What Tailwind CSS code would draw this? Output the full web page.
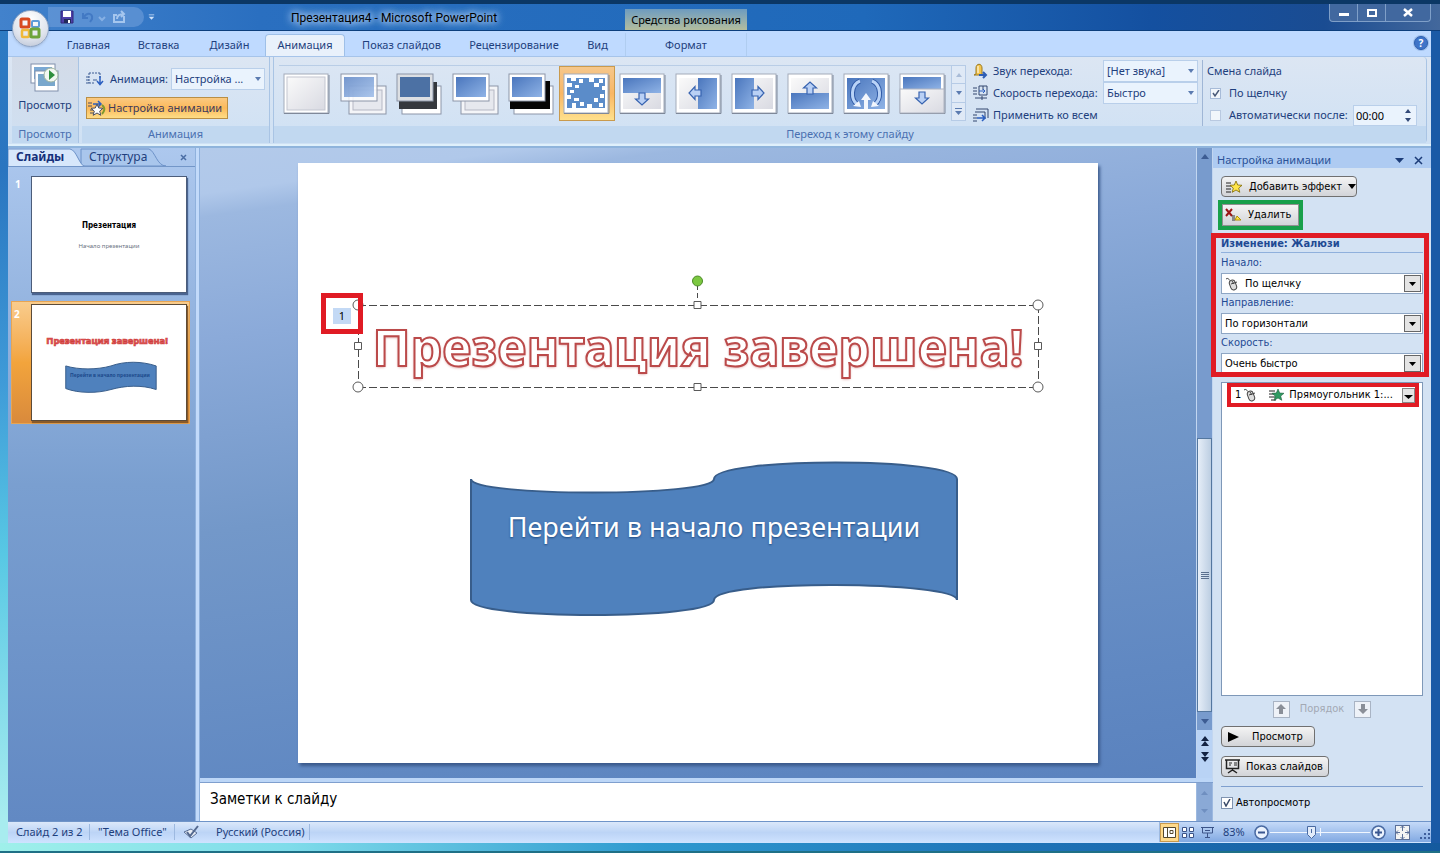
<!DOCTYPE html>
<html lang="ru">
<head>
<meta charset="utf-8">
<title>Презентация4 - Microsoft PowerPoint</title>
<script src="https://cdn.jsdelivr.net/npm/@tailwindcss/browser@4"></script>
</head>
<body class="font-['Noto_Sans','Open_Sans',sans-serif] text-[11px] leading-4 text-[#1e3f7d]">
<svg class="absolute size-0" aria-hidden="true">
  <defs>
    <linearGradient id="blue" x1="0" y1="0" x2="1" y2="1"><stop offset="0" stop-color="#4a76bd"/><stop offset="1" stop-color="#8fb3e6"/></linearGradient>
    <linearGradient id="paper" x1="0" y1="0" x2="1" y2="1"><stop offset="0" stop-color="#fafafa"/><stop offset="1" stop-color="#d9dae2"/></linearGradient>
    <g id="frame"><rect x="1" y="1" width="44" height="39" fill="#fff" stroke="#a3abba"/><path d="M1 40.500h45V2" fill="none" stroke="#7f8899"/></g>
    <path id="arrow" d="M-3-6h6v6h3.500L0 6l-6.500-6H-3z" fill="#b9d0f5" stroke="#3763b0" stroke-width="1.200"/>
    <g id="mouse" fill="none" stroke="#444" stroke-width="1"><path d="M1 2c3-2 3 2 5 2"/><rect x="5" y="3" width="6" height="10" rx="3" transform="rotate(-20 8 8)" fill="#ddd"/><path d="M6 7l6-2M7 4l2 3"/></g>
    <path id="star" d="M0-6l1.700 4 4.300.3-3.300 2.800 1.100 4.200L0 3l-3.800 2.300 1.100-4.200L-6-1.700l4.300-.3z"/>
  </defs>
</svg>

<div class="flex min-h-screen flex-col bg-[linear-gradient(180deg,#2f7cc4_0,#2a75c0_20%,#3f9bd8_45%,#58c8e4_65%,#a8ecef_96%)]">
  <div class="flex min-h-screen flex-col border-t-4 border-[#0b3765] bg-[linear-gradient(90deg,transparent_0,transparent_12px,#1a5aa6_90%)] pl-2 pr-[9px]">

    <!-- Title bar -->
    <header class="relative -ml-2 -mr-[9px] flex h-[27px] shrink-0 items-center border-b border-[#0d3f7c] bg-[linear-gradient(90deg,#4282cc_0,#2a6fc0_18%,#1f69ba_60%,#1450a0_80%,#1a4c92_92%,#43689c_100%)] pl-12">
      <div class="flex h-5 w-24 items-center gap-3 rounded-r-full bg-[#6f9fda]/60 pl-3">
        <button aria-label="Сохранить"><svg class="block" width="14" height="14" viewBox="0 0 14 14"><path d="M1 1h12v12H1z" fill="#4d3fa8" stroke="#33297a"/><path d="M3 1h8v6H3z" fill="#fff"/><path d="M4 9h7v4H4z" fill="#222a5a"/><path d="M8 10h2v3H8z" fill="#fff"/></svg></button>
        <button aria-label="Отменить" class="-ml-1"><svg class="block" width="26" height="14" viewBox="0 0 26 14" fill="none" stroke="#4279c4" stroke-width="2"><path d="M1 3v5h5M2 7c3-5 9-4 8 2l-2 3"/><path d="M17 7l3 3 3-3" stroke="#86b0e4"/></svg></button>
        <button aria-label="Вернуть" class="-ml-2"><svg class="block" width="14" height="14" viewBox="0 0 14 14" fill="none" stroke="#a5c6ee" stroke-width="2"><path d="M12 6v6H2V5h3"/><path d="M5 9c0-4 3-5 7-5M9 1l3 3-3 3"/></svg></button>
      </div>
      <button aria-label="Настройка панели" class="ml-1"><svg width="7" height="7" viewBox="0 0 9 8" fill="#cfe2fa"><path d="M1 0h7v1H1zM1 3h7L4.500 7z"/></svg></button>
      <h1 class="absolute left-[291px] top-[6px] font-['Roboto','Noto_Sans',sans-serif] text-xs text-black [text-shadow:0_0_6px_#b9d5f5,0_0_8px_#b9d5f5,0_0_10px_#b9d5f5]">Презентация4 - Microsoft PowerPoint</h1>
      <div class="absolute left-[625px] top-[5px] h-[21px] w-[122px] bg-gradient-to-b from-[#6d9bbf] to-[#b3bd9d] pt-[3px] text-center text-black">Средства рисования</div>
      <div class="absolute right-[9px] top-0 flex h-[18px] items-center rounded-b border border-t-0 border-[#7f9fc8] bg-[#41689f]">
        <button aria-label="Свернуть" class="flex h-full w-7 items-center justify-center border-r border-[#7f9fc8]"><span class="mt-1 h-[3px] w-2.5 bg-white"></span></button>
        <button aria-label="Развернуть" class="flex h-full w-7 items-center justify-center border-r border-[#7f9fc8]"><span class="h-2 w-2.5 border-2 border-white"></span></button>
        <button aria-label="Закрыть" class="flex h-full w-11 items-center justify-center"><svg width="10" height="9" viewBox="0 0 10 9" stroke="#fff" stroke-width="2.500"><path d="M1 1l8 7M9 1L1 8"/></svg></button>
      </div>
      <button aria-label="Office" class="absolute left-3 top-[6px] z-10 flex size-[37px] items-center justify-center rounded-full border border-[#8ea4c4] bg-[radial-gradient(circle_at_50%_25%,#ffffff,#dfe3ec_60%,#b4bfd2)] shadow">
        <svg width="25" height="25" viewBox="0 0 25 25" fill="none" stroke-width="3"><rect x="3" y="3" width="8" height="8" rx="1" stroke="#d8491f"/><rect x="14" y="5" width="7" height="6" rx="1" stroke="#5c9ad8" stroke-width="2"/><rect x="4" y="14" width="7" height="7" rx="1" stroke="#f0b93a" stroke-width="2.500"/><rect x="13" y="13" width="8" height="8" rx="1" stroke="#6da43c"/></svg>
      </button>
    </header>

    <!-- Ribbon tabs -->
    <nav class="flex h-[25px] shrink-0 items-end bg-[#bfdaff] pl-[46px] text-center">
      <a href="#" class="w-[69px] pb-[3px]">Главная</a>
      <a href="#" class="w-[71px] pb-[3px]">Вставка</a>
      <a href="#" class="w-[71px] pb-[3px]">Дизайн</a>
      <a href="#" class="w-20 rounded-t border border-b-0 border-[#9fc0e8] bg-[#e9f1fb] pb-[3px] pt-0.5">Анимация</a>
      <a href="#" class="w-[113px] pb-[3px]">Показ слайдов</a>
      <a href="#" class="w-[112px] pb-[3px]">Рецензирование</a>
      <a href="#" class="w-[55px] pb-[3px]">Вид</a>
      <a href="#" class="w-[122px] border-x border-[#b0cdf0] pb-[3px] pt-1">Формат</a>
      <button aria-label="Справка" class="mb-1.5 ml-auto mr-[3px] flex size-3.5 items-center justify-center rounded-full border border-[#2d5fae] bg-[#3f74c8] text-[10px] font-bold text-white ring-1 ring-[#9dbdea]">?</button>
    </nav>

    <!-- Ribbon -->
    <section class="flex h-[90px] shrink-0 gap-[3px] border-b-2 border-t border-b-[#dff0fb] border-t-[#a6c4ea] bg-gradient-to-b from-[#dce6f3] to-[#cfe1f4] px-1 pb-px">
      <div class="flex w-[67px] flex-col border-r border-[#a9c4e4]">
        <button class="flex flex-1 flex-col items-center gap-1 bg-gradient-to-b from-[#d3dbe8] to-[#d0dff0] pt-1.5">
          <svg width="32" height="30" viewBox="0 0 32 30"><rect x="2" y="1" width="24" height="19" fill="#fff" stroke="#8090ac"/><rect x="5" y="4" width="18" height="12" fill="#7ba9d4"/><rect x="6" y="8" width="23" height="20" fill="#fff" stroke="#8090ac"/><rect x="9" y="11" width="17" height="12" fill="#79a7cc"/><circle cx="22" cy="12" r="7" fill="#f2f7f2" stroke="#9fb49f"/><path d="M20 7l6 5-6 5z" fill="#2f8f3d"/></svg>
          Просмотр
        </button>
        <div class="h-[17px] bg-[#c1d8f0] text-center text-[#4a70b0]">Просмотр</div>
      </div>
      <div class="flex w-[188px] flex-col border-r border-[#a9c4e4]">
        <div class="flex flex-1 flex-col gap-[7px] pl-1 pt-[11px]">
          <div class="flex h-[22px] items-center">
            <svg class="mr-1.5 shrink-0" width="18" height="14" viewBox="0 0 18 14" fill="none" stroke="#3c5c94"><path d="M3 1h11M3 1v10M14 1v5M3 11h5" stroke-dasharray="2 1"/><path d="M0 5h3M0 8h3M0 11h3M7 8h4"/><path d="M14 4v8M11 9l3 3.500L17 9" stroke="#2b5fc0" stroke-width="1.500"/></svg>
            <label for="anim" class="w-[61px]">Анимация:</label>
            <span class="relative flex"><select id="anim" class="h-[22px] w-[94px] appearance-none border border-[#b9cfea] bg-[#eaf3fd] pl-[3px] pr-4"><option>Настройка ...</option></select><svg class="pointer-events-none absolute right-1 top-[9px]" width="6" height="4" fill="#5b7bb0"><path d="M0 0h6L3 4z"/></svg></span>
          </div>
          <button class="flex h-[22px] w-[142px] items-center gap-0.5 border border-[#b98f45] bg-gradient-to-b from-[#fbc980] via-[#fbb95a] to-[#fedd86] pl-px text-[#3d3a5c]">
            <svg class="shrink-0" width="18" height="16" viewBox="0 0 18 16" fill="none" stroke="#4a4f63"><path d="M0 3h4M0 6h4M2 10h4M2 13h4"/><path d="M5 4h8M10 1l3 3-3 3" stroke="#2b5fc0" stroke-width="1.500"/><use href="#star" x="9" y="10" fill="#fff"/><path d="M14 5c4 3 2 7 0 9" stroke="#7f9a2e" stroke-width="2"/></svg>
            <span class="whitespace-nowrap">Настройка анимации</span>
          </button>
        </div>
        <div class="h-[17px] bg-[#c1d8f0] text-center text-[#4a70b0]">Анимация</div>
      </div>
      <div class="flex flex-1 flex-col rounded-r border-x border-[#a9c4e4]">
        <div class="flex flex-1 items-start pl-[5px]">
          <div class="mt-2 flex border-t border-[#b9cde6]">
            <button aria-label="Нет перехода" class="flex h-[55px] w-14 items-center justify-center"><svg width="48" height="42"><use href="#frame"/><rect x="4" y="4" width="38" height="33" fill="url(#paper)" stroke="#c3c6d0"/></svg></button>
            <button aria-label="Плавное затухание" class="flex h-[55px] w-14 items-center justify-center"><svg width="48" height="42"><rect x="10" y="13" width="37" height="28" fill="#f4f5f8" stroke="#8c95a8"/><rect x="14" y="17" width="29" height="20" fill="#e6e8ee" stroke="#b5b8c4"/><rect x="2" y="1" width="36" height="27" fill="#fff" fill-opacity=".8" stroke="#8c95a8"/><rect x="5" y="4" width="30" height="20" fill="url(#blue)" opacity=".75"/></svg></button>
            <button aria-label="Через черный" class="flex h-[55px] w-14 items-center justify-center"><svg width="48" height="42"><rect x="7" y="13" width="39" height="28" fill="#fff" stroke="#8c95a8"/><rect x="4" y="9" width="38" height="27" fill="#35383d"/><rect x="2" y="1" width="36" height="27" fill="#dcdfe3" stroke="#8c95a8"/><rect x="5" y="4" width="30" height="20" fill="#4c71a4"/></svg></button>
            <button aria-label="Прорезание" class="flex h-[55px] w-14 items-center justify-center"><svg width="48" height="42"><rect x="10" y="13" width="37" height="28" fill="#f4f5f8" stroke="#8c95a8"/><rect x="14" y="17" width="29" height="20" fill="#e6e8ee" stroke="#b5b8c4"/><rect x="2" y="1" width="36" height="27" fill="#fff" stroke="#8c95a8"/><rect x="5" y="4" width="30" height="20" fill="url(#blue)"/></svg></button>
            <button aria-label="Прорезание через черный" class="flex h-[55px] w-14 items-center justify-center"><svg width="48" height="42"><rect x="7" y="13" width="39" height="28" fill="#fff" stroke="#8c95a8"/><rect x="3" y="8" width="40" height="28" fill="#050505"/><rect x="2" y="1" width="36" height="27" fill="#fff" stroke="#8c95a8"/><rect x="5" y="4" width="30" height="20" fill="url(#blue)"/></svg></button>
            <button aria-label="Растворение" class="flex h-[55px] w-14 items-center justify-center border border-[#c99a4d] bg-gradient-to-b from-[#f5c78b] via-[#f9b765] to-[#ffe08c]"><svg width="48" height="42"><use href="#frame"/><rect x="4" y="5" width="38" height="30" fill="#5b8cc9"/><path fill="#fff" d="M8 5h5v3H8zM16 6h4v4h-4zM26 5h5v4h-5zM36 6h4v4h-4zM4 10h5v4H4zM12 12h4v3h-4zM31 10h5v4h-5zM39 13h3v4h-3zM7 17h4v3H7zM4 22h4v4H4zM11 25h5v3h-5zM9 30h4v5H9zM17 29h4v4h-4zM24 31h5v4h-5zM31 25h4v4h-4zM37 21h4v4h-4zM36 30h4v4h-4z"/></svg></button>
            <button aria-label="Появление сверху" class="flex h-[55px] w-14 items-center justify-center"><svg width="48" height="42"><use href="#frame"/><rect x="4" y="5" width="38" height="31" fill="url(#paper)"/><rect x="4" y="5" width="38" height="15" fill="url(#blue)"/><use href="#arrow" transform="translate(23 26)"/></svg></button>
            <button aria-label="Появление справа" class="flex h-[55px] w-14 items-center justify-center"><svg width="48" height="42"><use href="#frame"/><rect x="4" y="5" width="38" height="31" fill="url(#paper)"/><rect x="23" y="5" width="19" height="31" fill="url(#blue)"/><use href="#arrow" transform="translate(20 20) rotate(90)"/></svg></button>
            <button aria-label="Появление слева" class="flex h-[55px] w-14 items-center justify-center"><svg width="48" height="42"><use href="#frame"/><rect x="4" y="5" width="38" height="31" fill="url(#paper)"/><rect x="4" y="5" width="19" height="31" fill="url(#blue)"/><use href="#arrow" transform="translate(27 20) rotate(-90)"/></svg></button>
            <button aria-label="Появление снизу" class="flex h-[55px] w-14 items-center justify-center"><svg width="48" height="42"><use href="#frame"/><rect x="4" y="5" width="38" height="31" fill="url(#paper)"/><rect x="4" y="20" width="38" height="16" fill="url(#blue)"/><use href="#arrow" transform="translate(23 15) rotate(180)"/></svg></button>
            <button aria-label="По часовой стрелке" class="flex h-[55px] w-14 items-center justify-center"><svg width="48" height="42"><use href="#frame"/><rect x="4" y="5" width="38" height="31" fill="url(#blue)"/><path d="M17 8C7 12 8 27 14 31M29 8c10 4 9 19 3 23" fill="none" stroke="#2f59a5" stroke-width="5"/><path d="M17 8C7 12 8 27 14 31M29 8c10 4 9 19 3 23" fill="none" stroke="#b9d3f7" stroke-width="3"/><path d="M23 20l5 7h-3v9h-4v-9h-3zM10 33l8 1-2-6zM36 33l-8 1 2-6z" fill="#f2f6fd"/></svg></button>
            <button aria-label="Открытие вниз" class="flex h-[55px] w-14 items-center justify-center"><svg width="48" height="42"><use href="#frame"/><rect x="4" y="4" width="38" height="12" fill="url(#blue)"/><rect x="1" y="16" width="44" height="24" fill="url(#paper)" stroke="#aeb4c2"/><use href="#arrow" transform="translate(23 25)"/></svg></button>
          </div>
          <div class="mt-2 flex h-14 w-[15px] flex-col border border-[#b6cbe6] bg-[#dfe9f6]">
            <button aria-label="Вверх" class="flex flex-1 items-center justify-center"><svg width="6" height="4" fill="#a9bcd8"><path d="M0 4h6L3 0z"/></svg></button>
            <button aria-label="Вниз" class="flex flex-1 items-center justify-center border-y border-[#b6cbe6]"><svg width="6" height="4" fill="#5b7bb0"><path d="M0 0h6L3 4z"/></svg></button>
            <button aria-label="Ещё" class="flex flex-1 items-center justify-center"><svg width="7" height="7" fill="#5b7bb0"><path d="M0 0h7v1H0zM0 3h7L3.500 7z"/></svg></button>
          </div>
          <div class="ml-[7px] mt-[3px] grid w-[225px] grid-cols-[20px_110px_95px] grid-rows-[22px_22px_22px] items-center">
            <svg width="16" height="16" viewBox="0 0 16 16"><path d="M3 11V5c0-5 6-5 6 0v6l2 1H1z" fill="#f3c44d" stroke="#9c7a20"/><path d="M5 3v7" stroke="#fff"/><path d="M6 12h7M10 9l3 3-3 3" fill="none" stroke="#2f5eb4" stroke-width="2"/></svg>
            <label for="snd">Звук перехода:</label>
            <span class="relative flex"><select id="snd" class="h-[22px] w-[95px] appearance-none border border-[#b9cfea] bg-[#eaf3fd] pl-[3px]"><option>[Нет звука]</option></select><svg class="pointer-events-none absolute right-1 top-[9px]" width="6" height="4" fill="#5b7bb0"><path d="M0 0h6L3 4z"/></svg></span>
            <svg width="16" height="16" viewBox="0 0 16 16" fill="none" stroke="#33466e"><path d="M0 3h4M0 6h4M0 9h4M6 1h8v9H6zM2 13h12M9 11v4M10 1v4"/><path d="M6 6h6M10 4l2 2-2 2" stroke="#2b5fc0"/></svg>
            <label for="spd" class="whitespace-nowrap">Скорость перехода:</label>
            <span class="relative flex"><select id="spd" class="h-[22px] w-[95px] appearance-none border border-[#b9cfea] bg-[#eaf3fd] pl-[3px]"><option>Быстро</option></select><svg class="pointer-events-none absolute right-1 top-[9px]" width="6" height="4" fill="#5b7bb0"><path d="M0 0h6L3 4z"/></svg></span>
            <svg width="16" height="14" viewBox="0 0 16 14" fill="none" stroke="#33466e"><path d="M3 1h12v9M2 4h10v7M0 7h4M0 10h4M0 13h4"/><path d="M4 10h8M9 7l3 3-3 3" stroke="#2b5fc0" stroke-width="1.500"/></svg>
            <button class="col-span-2 text-left">Применить ко всем</button>
          </div>
          <fieldset class="ml-1 mt-[3px] flex h-[66px] flex-col border-l border-[#9fb6d6] pl-1">
            <legend class="hidden">Смена слайда</legend>
            <div class="flex h-[22px] items-center" aria-hidden="true">Смена слайда</div>
            <div class="flex h-[22px] items-center gap-2"><span class="relative ml-[3px] flex"><input id="click" type="checkbox" checked class="size-[11px] appearance-none border border-[#a7bbd8] bg-[#f2f6fb]"><svg class="pointer-events-none absolute left-0.5 top-0.5" width="8" height="8" fill="none" stroke="#4a5a78" stroke-width="1.500"><path d="M1 3l2 3 4-6"/></svg></span><label for="click">По щелчку</label></div>
            <div class="flex h-[22px] items-center gap-2"><input id="auto" type="checkbox" class="ml-[3px] size-[11px] appearance-none border border-[#b9c9e0] bg-[#f2f6fb]"><label for="auto" class="w-[116px] whitespace-nowrap">Автоматически после:</label><span class="relative flex"><input aria-label="Время" value="00:00" class="h-[21px] w-16 border border-[#b9cfea] bg-[#eaf3fd] pl-0.5 text-black"><svg class="pointer-events-none absolute right-1.5 top-1" width="6" height="13" fill="#334a78"><path d="M0 4h6L3 0zM0 9h6l-3 4z"/></svg></span></div>
          </fieldset>
        </div>
        <div class="h-[17px] bg-[#c1d8f0] text-center text-[#4a70b0]">Переход к этому слайду</div>
      </div>
    </section>

    <!-- Work area -->
    <main class="flex flex-1 border-t-2 border-[#8fb4dc] bg-[#bcd6f5]">

      <!-- Slide list -->
      <aside class="flex w-[187px] shrink-0 flex-col bg-gradient-to-b from-[#adc8ee] via-[#7a9fd0] to-[#6289c3]">
        <div class="relative flex h-[19px] items-center border-b border-[#7396c8] text-xs">
          <svg class="absolute inset-0 h-full w-full" fill="#a9c6ec" stroke="#6d92c8"><path d="M73 1h68c6 2 8 17 17 17H73z"/><path d="M0 1h62c7 1 9 17 16 18H0z" fill="#d7e7fb"/></svg>
          <a href="#" class="relative w-[81px] pl-2 font-bold text-[#15307a]">Слайды</a>
          <a href="#" class="relative">Структура</a>
          <button aria-label="Закрыть" class="relative ml-auto mr-2"><svg width="7" height="7" stroke="#4a6da4" stroke-width="1.500"><path d="M1 1l5 5M6 1L1 6"/></svg></button>
        </div>
        <div class="flex flex-col pl-[3px] pr-[5px] pt-[3px]">
          <div class="flex pb-2 pl-px pt-1.5">
            <span class="w-[19px] shrink-0 pl-[3px] text-[10px] font-bold text-white">1</span>
            <div class="flex h-[117px] w-[156px] shrink-0 flex-col items-center border border-[#4c5d7a] bg-white pt-[41px] text-black shadow-[1px_2px_1px_#4a6490]">
              <div class="font-['DejaVu_Sans_Condensed','Noto_Sans',sans-serif] text-[8px] font-bold leading-4">Презентация</div>
              <div class="mt-1 text-[6px] leading-4 text-gray-500">Начало презентации</div>
            </div>
          </div>
          <div class="flex border border-[#e8a552] bg-gradient-to-b from-[#f9cc8c] via-[#f2a43c] to-[#d98a3c] py-0.5">
            <span class="w-[19px] shrink-0 pl-0.5 pt-0.5 text-[10px] font-bold text-white">2</span>
            <svg class="h-[117px] w-[156px] shrink-0 border border-[#5c4b38] bg-white shadow-[1px_2px_1px_#8a5a28]" viewBox="0 0 156 117">
              <text x="76" y="40" text-anchor="middle" font-size="9.500" font-weight="700" fill="#e0605c" stroke="#d03b3b" stroke-width=".7">Презентация завершена!</text>
              <path d="M34 62c13 4 32 4 46 0 14-5 31-5 46 0v24c-15-5-32-4-46 0-14 4-33 4-46-1z" fill="#4f81bd" stroke="#385d8a"/>
              <text x="79" y="73" text-anchor="middle" font-size="5" font-weight="700" fill="#1c4a8c">Перейти в начало презентации</text>
            </svg>
          </div>
        </div>
      </aside>
      <div class="w-[5px] shrink-0 border-x border-[#8fb1dd] bg-[#c2dafa]"></div>

      <!-- Slide and notes -->
      <div class="flex min-w-0 flex-1 flex-col">
        <div class="flex flex-1">
          <div class="flex flex-1 items-center justify-center bg-[linear-gradient(172deg,#b3caea_0,#b0c8ea_6%,#9cb8e0_9%,#8baad9_25%,#7398c9_50%,#6088c2_85%,#5a82be_100%)]">
            <div class="relative h-[600px] w-[800px] bg-white shadow-[2px_3px_3px_#3b5a8c]">
              <svg class="absolute left-0 top-0" width="800" height="600" fill="none">
                <path d="M60 142.500H741M60 224.500H741M60.500 142v82M740.500 142v82" stroke="#4a4a4a" stroke-dasharray="8 3"/>
                <path d="M399.500 122v20" stroke="#4a4a4a" stroke-dasharray="5 3"/>
                <circle cx="399.500" cy="118" r="5" fill="#7cc841" stroke="#4c8a28"/>
                <g fill="#fff" stroke="#5a5a5a"><circle cx="60" cy="142" r="5"/><circle cx="740" cy="142" r="5"/><circle cx="60" cy="224" r="5"/><circle cx="740" cy="224" r="5"/><path d="M396 138.500h7v7h-7zM396 220.500h7v7h-7zM56.500 179.500h7v7h-7zM736.500 179.500h7v7h-7z"/></g>
                <path d="M173 316C173 334 416 334 416 316C416 294 659 294 659 316V437C659 418 416 416 416 437C416 457 173 457 173 437Z" fill="#4f81bd" stroke="#385d8a" stroke-width="2"/>
              </svg>
              <div class="absolute left-[60px] top-[142px] flex h-[84px] w-[680px] items-center justify-center whitespace-nowrap font-['Noto_Sans','Open_Sans',sans-serif] text-[50px] font-bold text-white [-webkit-text-stroke:2px_#bb4a4a] [text-shadow:0_1px_3px_#d08080]">Презентация завершена!</div>
              <div class="absolute left-[173px] top-[344px] w-[486px] whitespace-nowrap text-center text-[27px] leading-10 text-white [text-shadow:0_1px_2px_#1f4a80]">Перейти в начало презентации</div>
              <div class="absolute left-[23px] top-[130px] flex h-[41px] w-[42px] items-center justify-center border-5 border-[#e01b24] pt-1"><span class="h-4 w-[18px] bg-[#c3d9f5] text-center text-black">1</span></div>
            </div>
          </div>
          <!-- Vertical scroll bar -->
          <div class="flex w-[17px] shrink-0 flex-col items-center border-x border-[#c2d6f0] bg-[#789bcd]">
            <button aria-label="Прокрутить вверх" class="flex h-4 items-center"><svg width="8" height="5" fill="#3d5c92"><path d="M0 5h8L4 0z"/></svg></button>
            <div class="flex w-full flex-1 flex-col justify-end">
              <div class="flex h-1/2 w-full flex-col items-center justify-center gap-px border border-[#54779f] bg-gradient-to-r from-[#e6eef8] to-[#bccee2]"><span class="h-px w-2 bg-[#5b708e]"></span><span class="h-px w-2 bg-[#5b708e]"></span><span class="h-px w-2 bg-[#5b708e]"></span><span class="h-px w-2 bg-[#5b708e]"></span></div>
            </div>
            <button aria-label="Прокрутить вниз" class="flex h-[18px] items-center"><svg width="8" height="5" fill="#3d5c92"><path d="M0 0h8L4 5z"/></svg></button>
            <div class="flex w-full flex-col items-center gap-1.5 bg-[#b9d3f5] pb-4 pt-1.5">
              <button aria-label="Предыдущий слайд"><svg class="block" width="8" height="10" fill="#142444"><path d="M0 5h8L4 0zM0 10h8L4 5z"/></svg></button>
              <button aria-label="Следующий слайд"><svg class="block" width="8" height="10" fill="#142444"><path d="M0 0h8L4 5zM0 5h8l-4 5z"/></svg></button>
            </div>
          </div>
        </div>
        <div class="h-[5px] border-b border-[#7f9fce] bg-[#bcd6f7]"></div>
        <div class="flex h-[38px] shrink-0">
          <textarea aria-label="Заметки" class="flex-1 resize-none overflow-hidden bg-white px-2.5 py-1.5 font-['DejaVu_Sans_Condensed','Noto_Sans',sans-serif] text-[15px] leading-5 text-black">Заметки к слайду</textarea>
          <div class="flex w-[17px] flex-col items-center justify-between border-x border-[#9db9e0] bg-[#8aa9d6] py-2"><svg width="7" height="4" fill="#6f8fc0"><path d="M0 4h7L3.500 0z"/></svg><svg width="7" height="4" fill="#6f8fc0"><path d="M0 0h7L3.500 4z"/></svg></div>
        </div>
      </div>

      <!-- Animation task pane -->
      <aside class="flex w-[218px] shrink-0 flex-col bg-[#d3e2f3] font-['DejaVu_Sans_Condensed','Noto_Sans',sans-serif] text-black">
        <div class="flex h-5 items-center bg-[#aecbf2] px-1 pt-1 text-[#2a5298] font-['Noto_Sans',sans-serif]">Настройка анимации
          <button aria-label="Меню" class="ml-auto"><svg width="9" height="5" fill="#1c3c78"><path d="M0 0h9L4.500 5z"/></svg></button>
          <button aria-label="Закрыть" class="ml-2.5 mr-1"><svg width="9" height="9" stroke="#1c3c78" stroke-width="1.500"><path d="M1 1l7 7M8 1L1 8"/></svg></button>
        </div>
        <div class="flex flex-1 flex-col pl-2 pr-2">
          <button class="mt-2 flex h-[21px] w-[136px] items-center gap-1 rounded-sm border border-[#707070] bg-gradient-to-b from-[#f4f4f4] to-[#d2d4d8] pl-1"><svg class="shrink-0" width="17" height="14" viewBox="0 0 17 14"><path d="M0 3h5M0 6h5M0 9h5M0 12h5" stroke="#222"/><use href="#star" x="10" y="7" fill="#ffe54a" stroke="#806a00" stroke-width=".8"/></svg><span class="whitespace-nowrap pl-0.5">Добавить эффект</span><svg class="ml-0.5 shrink-0" width="8" height="5"><path d="M0 0h8L4 5z"/></svg></button>
          <div class="-ml-[3px] mt-[3px] w-[85px] border-4 border-[#18a04a]">
            <button class="flex h-[22px] w-full items-center gap-1.5 border border-[#909090] bg-gradient-to-b from-[#f4f4f4] to-[#d2d4d8] pl-0.5"><svg width="17" height="14" viewBox="0 0 17 14" fill="none"><path d="M1 1l6 7M7 1L1 8" stroke="#9b1616" stroke-width="2"/><path d="M7 8h3M7 10h3M7 12h3" stroke="#333"/><path d="M10 12l2-4 4 4z" fill="#ffe54a" stroke="#b09000"/></svg>Удалить</button>
          </div>
          <div class="relative mt-[7px] flex flex-col">
            <h2 class="h-4 border-b border-[#8fb0dc] font-bold leading-[14px] text-[#1f4a94]">Изменение: Жалюзи</h2>
            <label for="start" class="mt-0.5 h-4 text-[#1f4a94]">Начало:</label>
            <span class="relative mt-0.5 flex"><select id="start" class="h-[21px] w-full appearance-none border border-[#8ea6c4] bg-white pl-[23px]"><option>По щелчку</option></select><svg class="pointer-events-none absolute left-1 top-1" width="14" height="14"><use href="#mouse"/></svg><svg class="pointer-events-none absolute right-0.5 top-0.5" width="17" height="17"><rect x=".5" y=".5" width="16" height="16" fill="#e4e4e4" stroke="#666"/><path d="M5 7h7l-3.500 4z"/></svg></span>
            <label for="dir" class="mt-px h-4 text-[#1f4a94]">Направление:</label>
            <span class="relative mt-0.5 flex"><select id="dir" class="h-[21px] w-full appearance-none border border-[#8ea6c4] bg-white pl-[3px]"><option>По горизонтали</option></select><svg class="pointer-events-none absolute right-0.5 top-0.5" width="17" height="17"><rect x=".5" y=".5" width="16" height="16" fill="#e4e4e4" stroke="#666"/><path d="M5 7h7l-3.500 4z"/></svg></span>
            <label for="speed" class="mt-px h-4 text-[#1f4a94]">Скорость:</label>
            <span class="relative mt-0.5 flex"><select id="speed" class="h-[21px] w-full appearance-none border border-[#8ea6c4] bg-white pl-[3px]"><option>Очень быстро</option></select><svg class="pointer-events-none absolute right-0.5 top-0.5" width="17" height="17"><rect x=".5" y=".5" width="16" height="16" fill="#e4e4e4" stroke="#666"/><path d="M5 7h7l-3.500 4z"/></svg></span>
            <div class="pointer-events-none absolute -bottom-[3px] -left-2.5 -right-1.5 -top-1 border-5 border-[#e01b24]"></div>
          </div>
          <div class="mt-2 flex-1 border border-[#7e98b8] bg-white pl-[5px] pr-[3px]">
            <div class="flex h-6 items-center border-4 border-[#e01b24] pl-1">1<svg class="ml-0.5" width="14" height="14"><use href="#mouse"/></svg><svg class="ml-3" width="16" height="14" viewBox="0 0 16 14"><path d="M0 3h6M0 6h6M0 9h6M2 12h5" stroke="#222"/><use href="#star" x="9" y="7" fill="#2f9b62" stroke="#1c5c3a" stroke-width=".6"/></svg><span class="ml-1 whitespace-nowrap">Прямоугольник 1:...</span><button aria-label="Меню эффекта" class="ml-auto"><svg class="block" width="13" height="15"><rect x=".5" y=".5" width="12" height="14" fill="#e4e4e4" stroke="#888"/><path d="M2 7h9l-4.500 4z"/></svg></button></div>
          </div>
          <div class="flex h-[26px] items-center justify-center gap-2.5 text-[#a3a9b3]">
            <button aria-label="Выше" class="flex size-[17px] items-center justify-center border border-[#a9b4c4] bg-[#eef2f8]"><svg width="10" height="10" fill="#8a8f98"><path d="M3 10V5H0l5-5 5 5H7v5z"/></svg></button>Порядок
            <button aria-label="Ниже" class="flex size-[17px] items-center justify-center border border-[#a9b4c4] bg-[#eef2f8]"><svg width="10" height="10" fill="#8a8f98"><path d="M3 0v5H0l5 5 5-5H7V0z"/></svg></button>
          </div>
          <button class="mt-1 flex h-[21px] w-[94px] items-center gap-3 rounded-sm border border-[#707070] bg-gradient-to-b from-[#f4f4f4] to-[#d2d4d8] pl-1.5"><svg width="12" height="10"><path d="M0 0l11 5-11 5z"/></svg>Просмотр</button>
          <button class="mt-[9px] flex h-[21px] w-[108px] items-center gap-1.5 whitespace-nowrap rounded-sm border border-[#707070] bg-gradient-to-b from-[#f4f4f4] to-[#d2d4d8] pl-[3px]"><svg class="shrink-0" width="15" height="15" viewBox="0 0 15 15" fill="none" stroke="#222"><path d="M0 1h15M1.500 1v8.500h12V1M7.500 10v2M3 14l4.500-3 4.500 3" stroke-width="1.500"/><path d="M4 4h3M4 6h2M9 4h3M9 6h3"/></svg>Показ слайдов</button>
          <div class="mt-[9px] h-px bg-[#7f9fce]"></div>
          <div class="flex h-[34px] items-center gap-[3px] pb-0.5"><span class="relative flex"><input id="ap" type="checkbox" checked class="size-3 appearance-none border border-[#7f93b0] bg-white"><svg class="pointer-events-none absolute left-0.5 top-0.5" width="8" height="8" fill="none" stroke="#3a4a68" stroke-width="1.500"><path d="M1 3l2 4 4-7"/></svg></span><label for="ap">Автопросмотр</label></div>
        </div>
      </aside>
    </main>

    <!-- Status bar -->
    <footer class="flex h-[22px] shrink-0 items-center border-t border-[#6f94c8] bg-gradient-to-b from-[#dbe8fa] via-[#bcd4f6] to-[#cfe3ff] pb-px">
      <span class="w-[82px] border-r border-[#9db9e0] pl-2">Слайд 2 из 2</span>
      <span class="w-[85px] border-r border-[#9db9e0] pl-2">"Тема Office"</span>
      <svg class="ml-2" width="17" height="15" viewBox="0 0 17 15"><path d="M1 7l7-3 6 4-6 5z" fill="#e9eef6" stroke="#5a7098"/><path d="M4 7l3 4 8-10" fill="none" stroke="#54698f" stroke-width="2"/></svg>
      <span class="ml-2 border-r border-[#9db9e0] pl-2 pr-1">Русский (Россия)</span>
      <div class="ml-auto flex h-full items-center border-l border-[#9db9e0] bg-gradient-to-b from-[#c5daf8] to-[#82a9e2] pr-px">
        <button aria-label="Обычный" class="flex h-[19px] w-[19px] items-center justify-center border border-[#c99a4d] bg-[#ffd98a]"><svg width="13" height="11" fill="#fff" stroke="#54482f"><path d="M.5.5h12v10H.5zM4.500.5v10M7 3.500h3v3H7z"/></svg></button>
        <button aria-label="Сортировщик" class="flex w-[18px] justify-center"><svg width="12" height="11" fill="#fff" stroke="#3c5488"><path d="M.5.5h4v4h-4zM7.500.5h4v4h-4zM.5 6.500h4v4h-4zM7.500 6.500h4v4h-4z"/></svg></button>
        <button aria-label="Показ слайдов" class="flex w-5 justify-center"><svg width="13" height="11" fill="none" stroke="#3c5488"><path d="M0 .5h13M1.500 1v5h10V1M6.500 6v4M4 10.500h5M4 3.500h5"/></svg></button>
        <span class="w-9 pl-1.5">83%</span>
        <button aria-label="Уменьшить"><svg class="block" width="17" height="17" viewBox="0 0 17 17"><circle cx="8.500" cy="8.500" r="6.500" fill="#eaf2fd" stroke="#4a6aa2" stroke-width="1.500"/><path d="M5 8.500h7" stroke="#3a5790" stroke-width="2"/></svg></button>
        <span class="relative flex w-[100px] items-center"><input aria-label="Масштаб" type="range" value="42" class="h-4 w-full appearance-none bg-[linear-gradient(180deg,transparent_8px,#f0f6ff_8px,#f0f6ff_9px,transparent_9px)] [&::-webkit-slider-thumb]:invisible"><svg class="pointer-events-none absolute left-[37px] top-0.5" width="9" height="13" fill="#e2ecfa" stroke="#4a6aa2"><path d="M.5.5h8v8l-4 4-4-4zM4.500 3v4"/></svg><span class="pointer-events-none absolute left-1/2 h-2 w-px bg-[#f0f6ff]"></span></span>
        <button aria-label="Увеличить"><svg class="block" width="17" height="17" viewBox="0 0 17 17"><circle cx="8.500" cy="8.500" r="6.500" fill="#eaf2fd" stroke="#4a6aa2" stroke-width="1.500"/><path d="M5 8.500h7M8.500 5v7" stroke="#3a5790" stroke-width="2"/></svg></button>
        <button aria-label="По размеру окна" class="ml-2"><svg class="block" width="15" height="15" fill="none" stroke="#5b7099"><rect x=".5" y=".5" width="14" height="14" fill="#f3f4f4"/><path d="M7.500 1v5M5.500 3l2-2 2 2M7.500 14V9M5.500 12l2 2 2-2M1 7.500h4M14 7.500h-4M3 5.500l-2 2 2 2M12 5.500l2 2-2 2"/></svg></button>
        <svg class="ml-2.5 mt-1" width="10" height="10" fill="#3f5f9c"><path d="M8 0h2v2H8zM4 4h2v2H4zM8 4h2v2H8zM0 8h2v2H0zM4 8h2v2H4zM8 8h2v2H8z"/></svg>
      </div>
    </footer>
    <div class="-ml-2 -mr-[9px] h-2.5 shrink-0 border-b-2 border-[#1f7086] bg-[linear-gradient(90deg,#9ff0ea_0,#7fdcea_20%,#2f9ad0_45%,#1f74b8_70%,#145a9e_100%)]"></div>
  </div>
</div>
</body>
</html>
